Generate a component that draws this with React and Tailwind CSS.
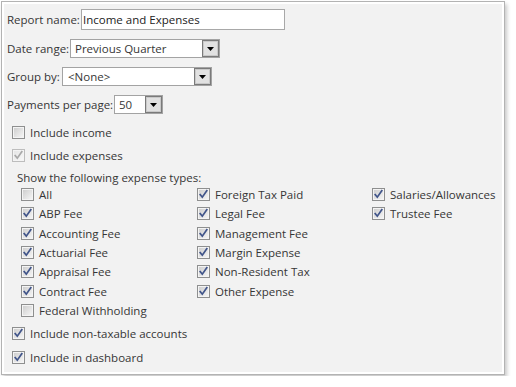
import { useId } from "react";

const FONT = { fontFamily: '"Open Sans", "Noto Sans", sans-serif' };

// classic win7 style checkbox
const Check = ({ checked, disabled }) => {
  const id = useId();
  return (
    <svg width="13" height="13" viewBox="0 0 13 13" className="shrink-0">
      <defs>
        <linearGradient id={id} x1="0" y1="0" x2="1" y2="1">
          <stop offset="0" stopColor={disabled ? "#e6e6e6" : "#cfcfcf"} />
          <stop offset="1" stopColor={disabled ? "#f7f7f7" : "#f4f4f4"} />
        </linearGradient>
      </defs>
      <rect x="0.5" y="0.5" width="12" height="12" fill="#f4f4f4" stroke={disabled ? "#bdbdbd" : "#8e8f8f"} />
      <rect x="2" y="2" width="9" height="9" fill={`url(#${id})`} />
      {checked && (
        <path
          d="M3.2 6.6 L5.3 9.2 L9.8 2.8"
          fill="none"
          stroke={disabled ? "#a9a9a9" : "#41558a"}
          strokeWidth="1.7"
          strokeLinecap="square"
        />
      )}
    </svg>
  );
};

const Arrow = () => (
  <div className="flex h-full w-[17px] items-center justify-center border border-[#7a7a7a] bg-[#e1e1e1] shadow-[inset_0_0_0_1px_#c9c9c9]">
    <svg width="7" height="4" viewBox="0 0 7 4">
      <path d="M0 0 H7 L3.5 4 Z" fill="#000" />
    </svg>
  </div>
);

const Select = ({ value, width, pad }) => (
  <div className={`flex h-[19px] items-center border border-[#a3a3a3] bg-white ${width}`}>
    <span className={`flex-1 leading-none ${pad}`}>{value}</span>
    <Arrow />
  </div>
);

const col1 = [
  ["All", false],
  ["ABP Fee", true],
  ["Accounting Fee", true],
  ["Actuarial Fee", true],
  ["Appraisal Fee", true],
  ["Contract Fee", true],
  ["Federal Withholding", false],
];
const col2 = [
  "Foreign Tax Paid",
  "Legal Fee",
  "Management Fee",
  "Margin Expense",
  "Non-Resident Tax",
  "Other Expense",
];
const col3 = ["Salaries/Allowances", "Trustee Fee"];

const Item = ({ label, checked, disabled }) => (
  <div className="flex h-[19.33px] items-center gap-[5px]">
    <Check checked={checked} disabled={disabled} />
    <span className="leading-none">{label}</span>
  </div>
);

export default function App() {
  return (
    <div className="p-[1px]" style={FONT}>
      <div className="h-[374px] w-[504px] border border-[#b3b3b3] bg-[#f2f2f2] pl-[5px] pt-[7px] text-[11.5px] text-[#363636] shadow-[inset_0_0_0_2px_#fff,2px_3px_4px_rgba(0,0,0,0.22)]">
        <div className="flex h-[21px] items-center">
          <span className="w-[74px]">Report name:</span>
          <div className="flex h-[21px] w-[204px] items-center border border-[#a8a8a8] bg-white pl-[1px] text-[#222]">
            Income and Expenses
          </div>
        </div>

        <div className="mt-[9px] flex items-center">
          <span className="w-[63px]">Date range:</span>
          <Select value="Previous Quarter" width="w-[150px]" pad="pl-[4px]" />
        </div>

        <div className="mt-[9px] flex items-center">
          <span className="w-[55px]">Group by:</span>
          <Select value="<None>" width="w-[150px]" pad="pl-[5px]" />
        </div>

        <div className="mt-[9px] flex items-center">
          <span className="w-[107px]">Payments per page:</span>
          <Select value="50" width="w-[49px]" pad="pl-[4px]" />
        </div>

        <div className="ml-[5px] mt-[12px] flex h-[13px] items-center gap-[5px]">
          <Check />
          <span>Include income</span>
        </div>

        <div className="ml-[5px] mt-[10px] flex h-[13px] items-center gap-[5px]">
          <Check checked disabled />
          <span>Include expenses</span>
        </div>

        <div className="ml-[10px] mt-[8px] h-[15px] leading-[15px]">
          Show the following expense types:
        </div>

        <div className="ml-[14px] flex">
          <div className="w-[176px]">
            {col1.map(([l, c]) => (
              <Item key={l} label={l} checked={c} />
            ))}
          </div>
          <div className="w-[175px]">
            {col2.map((l) => (
              <Item key={l} label={l} checked />
            ))}
          </div>
          <div>
            {col3.map((l) => (
              <Item key={l} label={l} checked />
            ))}
          </div>
        </div>

        <div className="ml-[5px] mt-[7px] flex h-[13px] items-center gap-[5px]">
          <Check checked />
          <span>Include non-taxable accounts</span>
        </div>

        <div className="ml-[5px] mt-[11px] flex h-[13px] items-center gap-[5px]">
          <Check checked />
          <span>Include in dashboard</span>
        </div>
      </div>
    </div>
  );
}
